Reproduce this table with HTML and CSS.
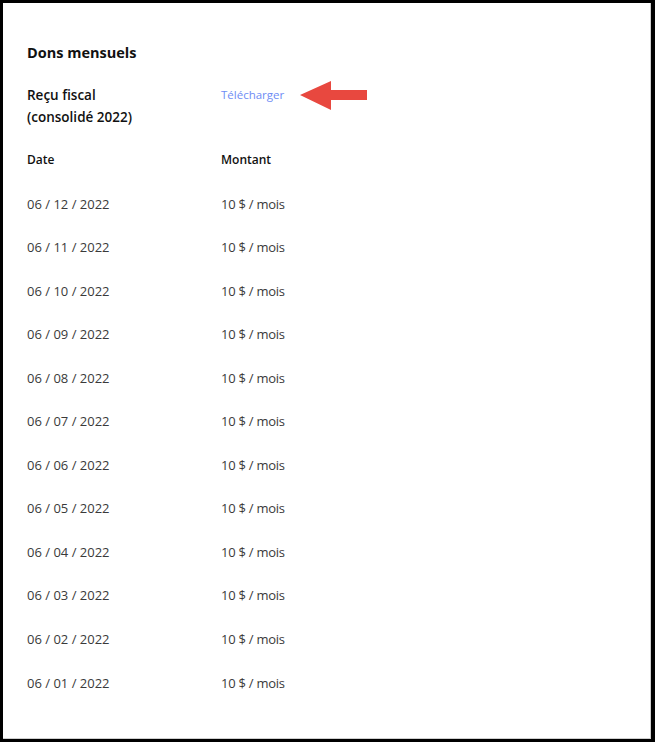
FILE: index.html
```html
<!DOCTYPE html>
<html>
  <head>
    <meta charset="utf-8">
    <title>Dons mensuels</title>
    <link rel="stylesheet" href="styles.css">
  </head>
  <body>
    <div class="frame">
      <h2 class="title">Dons mensuels</h2>

      <div class="receipt">
        <div class="receipt-label">Reçu fiscal<br>(consolidé 2022)</div>
        <div class="receipt-link">
          <a href="#">Télécharger</a>
          <!-- flèche rouge -->
          <svg class="arrow" width="70" height="30" viewBox="0 0 70 30">
            <polygon points="0,14 31,0 31,9 67,9 67,19 31,19 31,29" fill="#e8483f"/>
          </svg>
        </div>
      </div>

      <div class="list">
        <div class="head">Date</div><div class="head">Montant</div>
        <div class="cell">06 / 12 / 2022</div><div class="cell amount">10 $ / mois</div>
        <div class="cell">06 / 11 / 2022</div><div class="cell amount">10 $ / mois</div>
        <div class="cell">06 / 10 / 2022</div><div class="cell amount">10 $ / mois</div>
        <div class="cell">06 / 09 / 2022</div><div class="cell amount">10 $ / mois</div>
        <div class="cell">06 / 08 / 2022</div><div class="cell amount">10 $ / mois</div>
        <div class="cell">06 / 07 / 2022</div><div class="cell amount">10 $ / mois</div>
        <div class="cell">06 / 06 / 2022</div><div class="cell amount">10 $ / mois</div>
        <div class="cell">06 / 05 / 2022</div><div class="cell amount">10 $ / mois</div>
        <div class="cell">06 / 04 / 2022</div><div class="cell amount">10 $ / mois</div>
        <div class="cell">06 / 03 / 2022</div><div class="cell amount">10 $ / mois</div>
        <div class="cell">06 / 02 / 2022</div><div class="cell amount">10 $ / mois</div>
        <div class="cell">06 / 01 / 2022</div><div class="cell amount">10 $ / mois</div>
      </div>
    </div>
  </body>
</html>
```

FILE: styles.css
```css
html, body {
  margin: 0;
  padding: 0;
  background: #000000;
}
body {
  font-family: "Open Sans", "Lato", sans-serif;
  color: #111111;
}
.frame {
  box-sizing: border-box;
  width: 648px;
  height: 736px;
  margin: 3px 0 0 3px;
  background: #ffffff;
  border-right: 1px solid #cfcfcf;
  border-bottom: 1px solid #cfcfcf;
  padding: 40px 0 0 24px;
}
.title {
  margin: 0;
  font-size: 14.5px;
  font-weight: 700;
  line-height: 20px;
}
.receipt {
  display: grid;
  grid-template-columns: 194px auto;
  margin-top: 21px;
}
.receipt-label {
  font-size: 13.5px;
  font-weight: 600;
  line-height: 22px;
}
.receipt-link {
  display: flex;
  align-items: flex-start;
  gap: 16px;
}
.receipt-link a {
  color: #6e8cf5;
  font-size: 11.5px;
  text-decoration: none;
  line-height: 22px;
}
.arrow {
  margin-top: -3px;
}
.list {
  display: grid;
  grid-template-columns: 194px auto;
  grid-auto-rows: 43.55px;
  margin-top: 21px;
  width: 400px;
}
.head {
  font-size: 12px;
  font-weight: 600;
  line-height: 22px;
}
.cell {
  font-size: 13px;
  color: #3a3a3a;
  line-height: 22px;
}
.amount {
  letter-spacing: -0.25px;
}
```
